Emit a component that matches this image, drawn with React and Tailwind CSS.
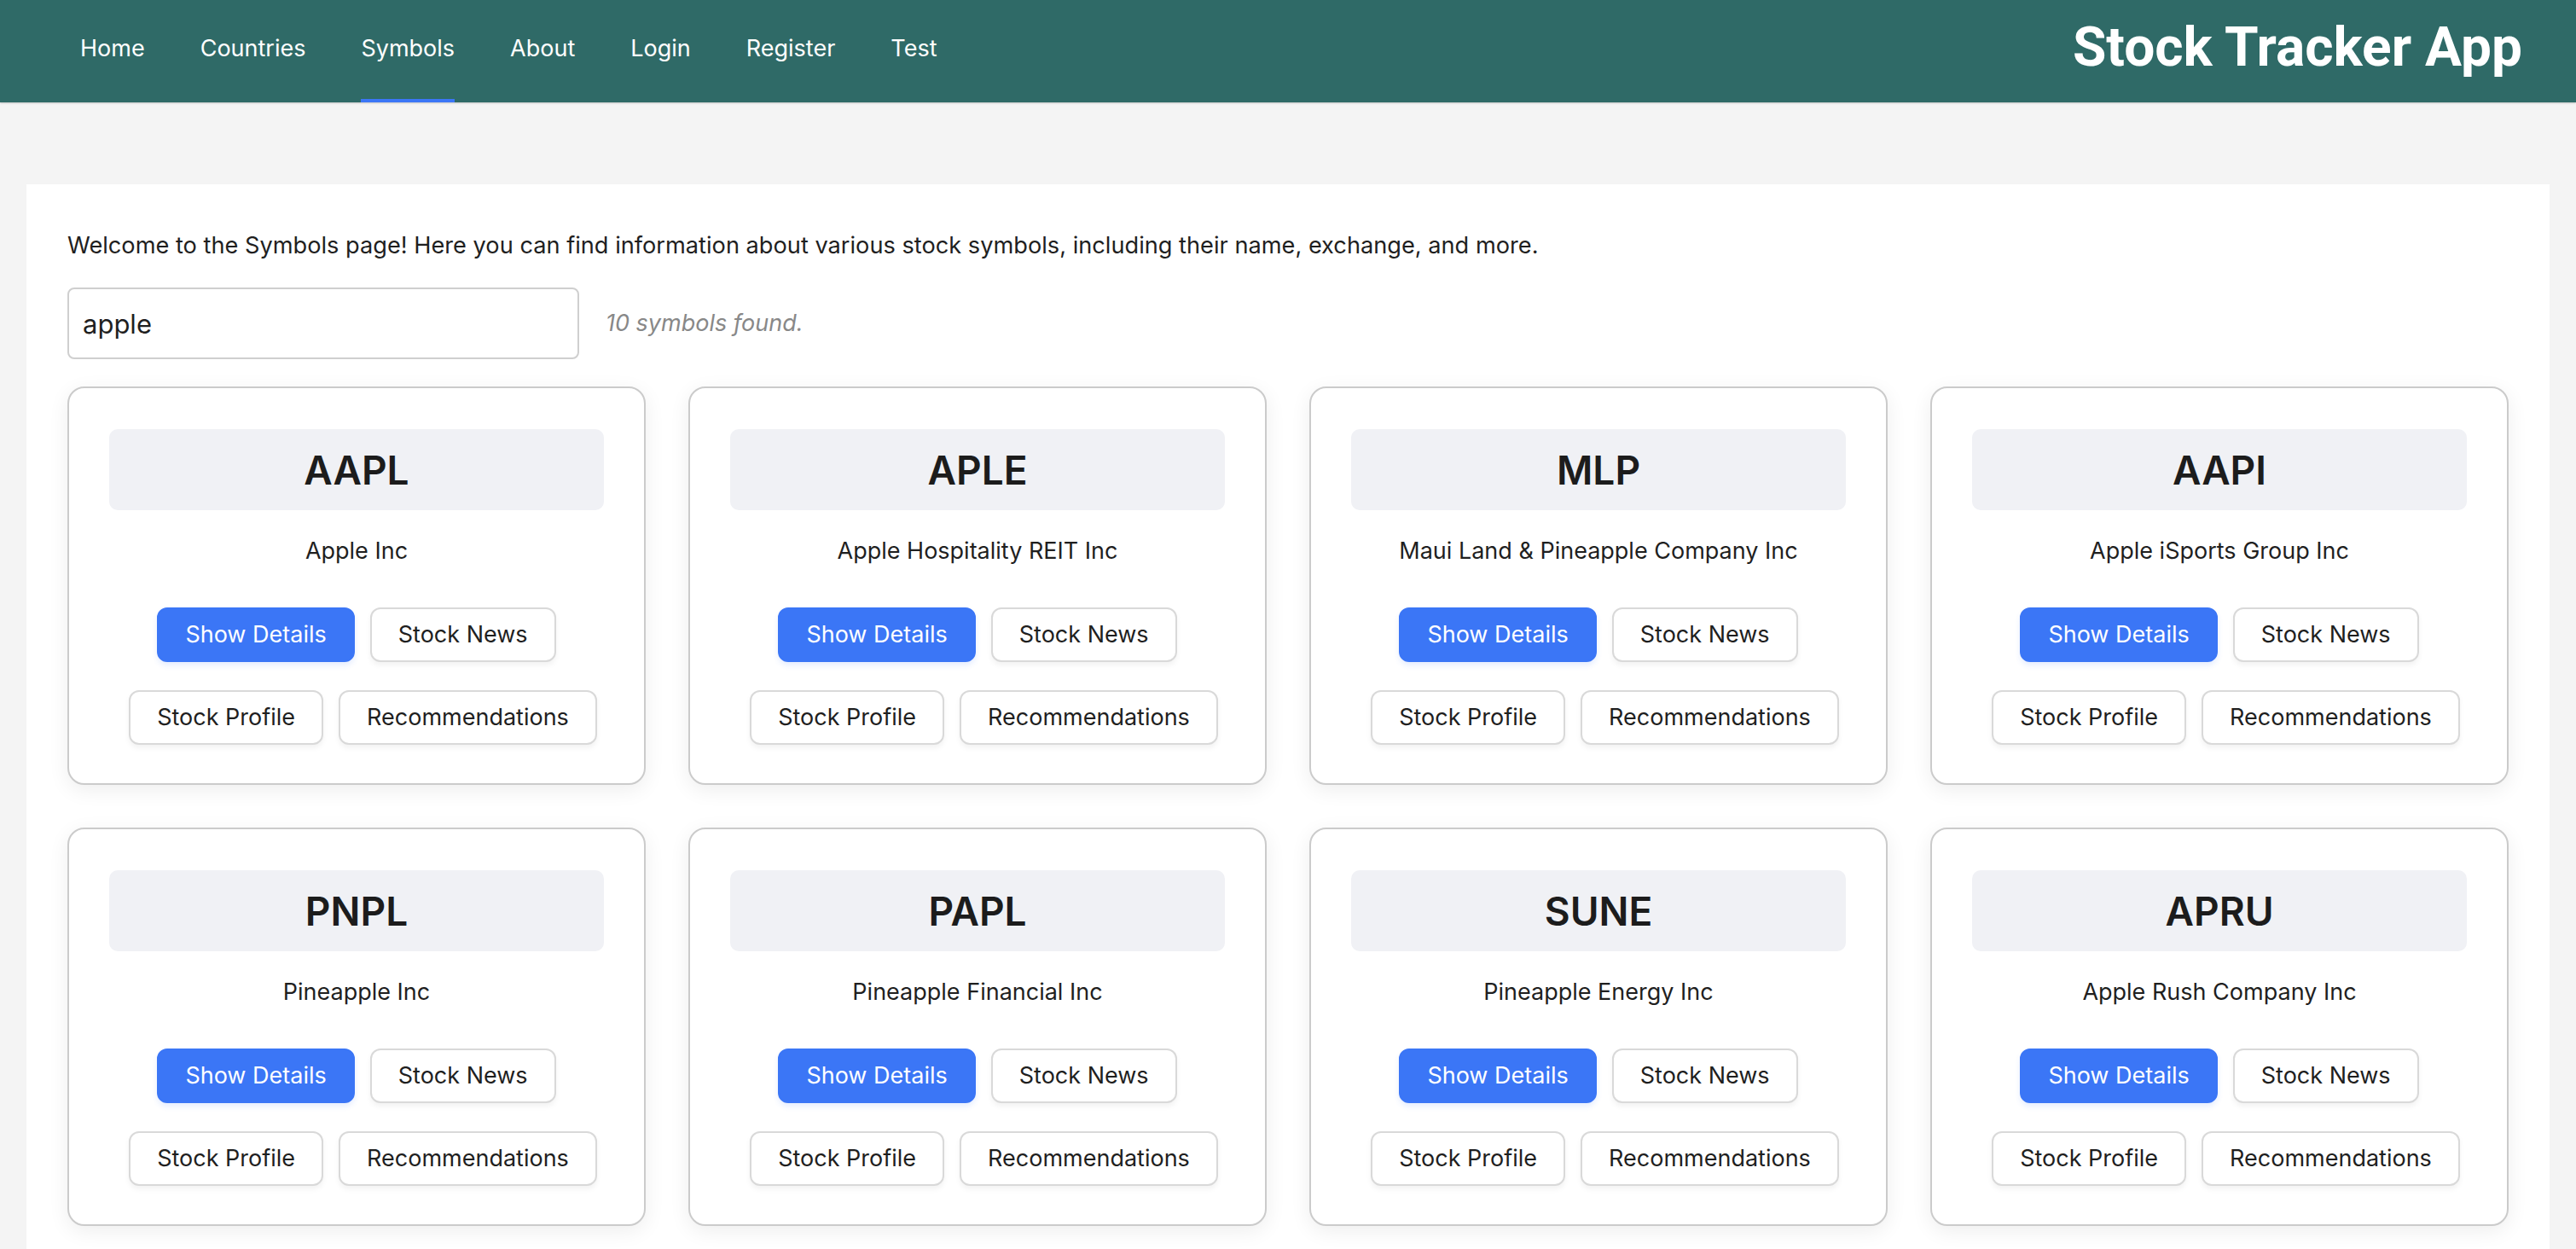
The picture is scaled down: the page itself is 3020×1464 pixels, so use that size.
import React from "react";

const NAV = ["Home", "Countries", "Symbols", "About", "Login", "Register", "Test"];

const SYMBOLS = [
  ["AAPL", "Apple Inc"],
  ["APLE", "Apple Hospitality REIT Inc"],
  ["MLP", "Maui Land & Pineapple Company Inc"],
  ["AAPI", "Apple iSports Group Inc"],
  ["PNPL", "Pineapple Inc"],
  ["PAPL", "Pineapple Financial Inc"],
  ["SUNE", "Pineapple Energy Inc"],
  ["APRU", "Apple Rush Company Inc"],
  ["PEGY", "Pineapple Energy Inc"],
  ["APPIF", "Apple iSports Group Inc"],
];

function Btn({ primary, children }) {
  return (
    <button
      className={
        primary
          ? "h-[64px] px-[31px] rounded-[12px] bg-[#3b76f6] text-white text-[27px] border-2 border-[#3b76f6] shadow-[0_4px_6px_rgba(59,118,246,0.12)]"
          : "h-[64px] px-[31px] rounded-[12px] bg-white text-[#1f1f1f] text-[27px] border-2 border-[#d9d9d9] shadow-[0_4px_6px_rgba(0,0,0,0.05)]"
      }
    >
      {children}
    </button>
  );
}

function Card({ sym, name }) {
  return (
    <div className="bg-white border-2 border-[#cbcbcb] rounded-[20px] shadow-[0_6px_24px_rgba(0,0,0,0.07)] px-[47px] pt-[48px] pb-[45px] flex flex-col items-center">
      <div className="w-full h-[95px] bg-[#f0f1f5] rounded-[10px] flex items-center justify-center">
        <span className="text-[46px] font-semibold text-[#1c1c1c] leading-none">{sym}</span>
      </div>
      <div className="mt-[28px] h-[40px] flex items-center text-[27px] text-[#1f1f1f]">{name}</div>
      <div className="mt-[46px] flex gap-[18px]">
        <Btn primary>Show Details</Btn>
        <Btn>Stock News</Btn>
      </div>
      <div className="mt-[33px] ml-[15px] flex gap-[18px]">
        <Btn>Stock Profile</Btn>
        <Btn>Recommendations</Btn>
      </div>
    </div>
  );
}

export default function App() {
  return (
    <div className="min-h-screen bg-[#f4f4f4]" style={{ fontFamily: "Inter, 'Noto Sans', sans-serif" }}>
      <header className="h-[120px] bg-[#2f6a67] flex items-stretch justify-between pl-[94px] pr-[63px] shadow-[0_1px_2px_rgba(0,0,0,0.2)]">
        <nav className="flex items-stretch gap-[65px]">
          {NAV.map((n) => (
            <div key={n} className="relative flex items-center pb-[6px] text-white text-[27px]">
              <span>{n}</span>
              {n === "Symbols" && (
                <div className="absolute left-0 right-0 bottom-0 h-[4px] bg-[#3b76f6]" />
              )}
            </div>
          ))}
        </nav>
        <div className="flex items-center pb-[8px]">
          <h1 className="text-white text-[64px] font-bold" style={{ fontFamily: "Roboto, sans-serif" }}>
            Stock Tracker App
          </h1>
        </div>
      </header>
      <main className="px-[31px] pt-[96px]">
        <div className="bg-white px-[48px] pt-[52px] pb-[60px]">
          <p className="text-[27.2px] leading-[40px] text-[#1f1f1f]">
            Welcome to the Symbols page! Here you can find information about various stock symbols, including their name, exchange, and more.
          </p>
          <div className="mt-[29px] flex items-center gap-[31px]">
            <input
              defaultValue="apple"
              className="w-[600px] h-[84px] border-2 border-[#cfcfcf] rounded-[8px] px-[16px] text-[31px] text-[#1f1f1f] outline-none"
            />
            <span className="italic text-[27px] text-[#888888]">10 symbols found.</span>
          </div>
          <div className="mt-[32px] grid grid-cols-4 gap-[50px]">
            {SYMBOLS.map(([s, n]) => (
              <Card key={s} sym={s} name={n} />
            ))}
          </div>
        </div>
      </main>
    </div>
  );
}
